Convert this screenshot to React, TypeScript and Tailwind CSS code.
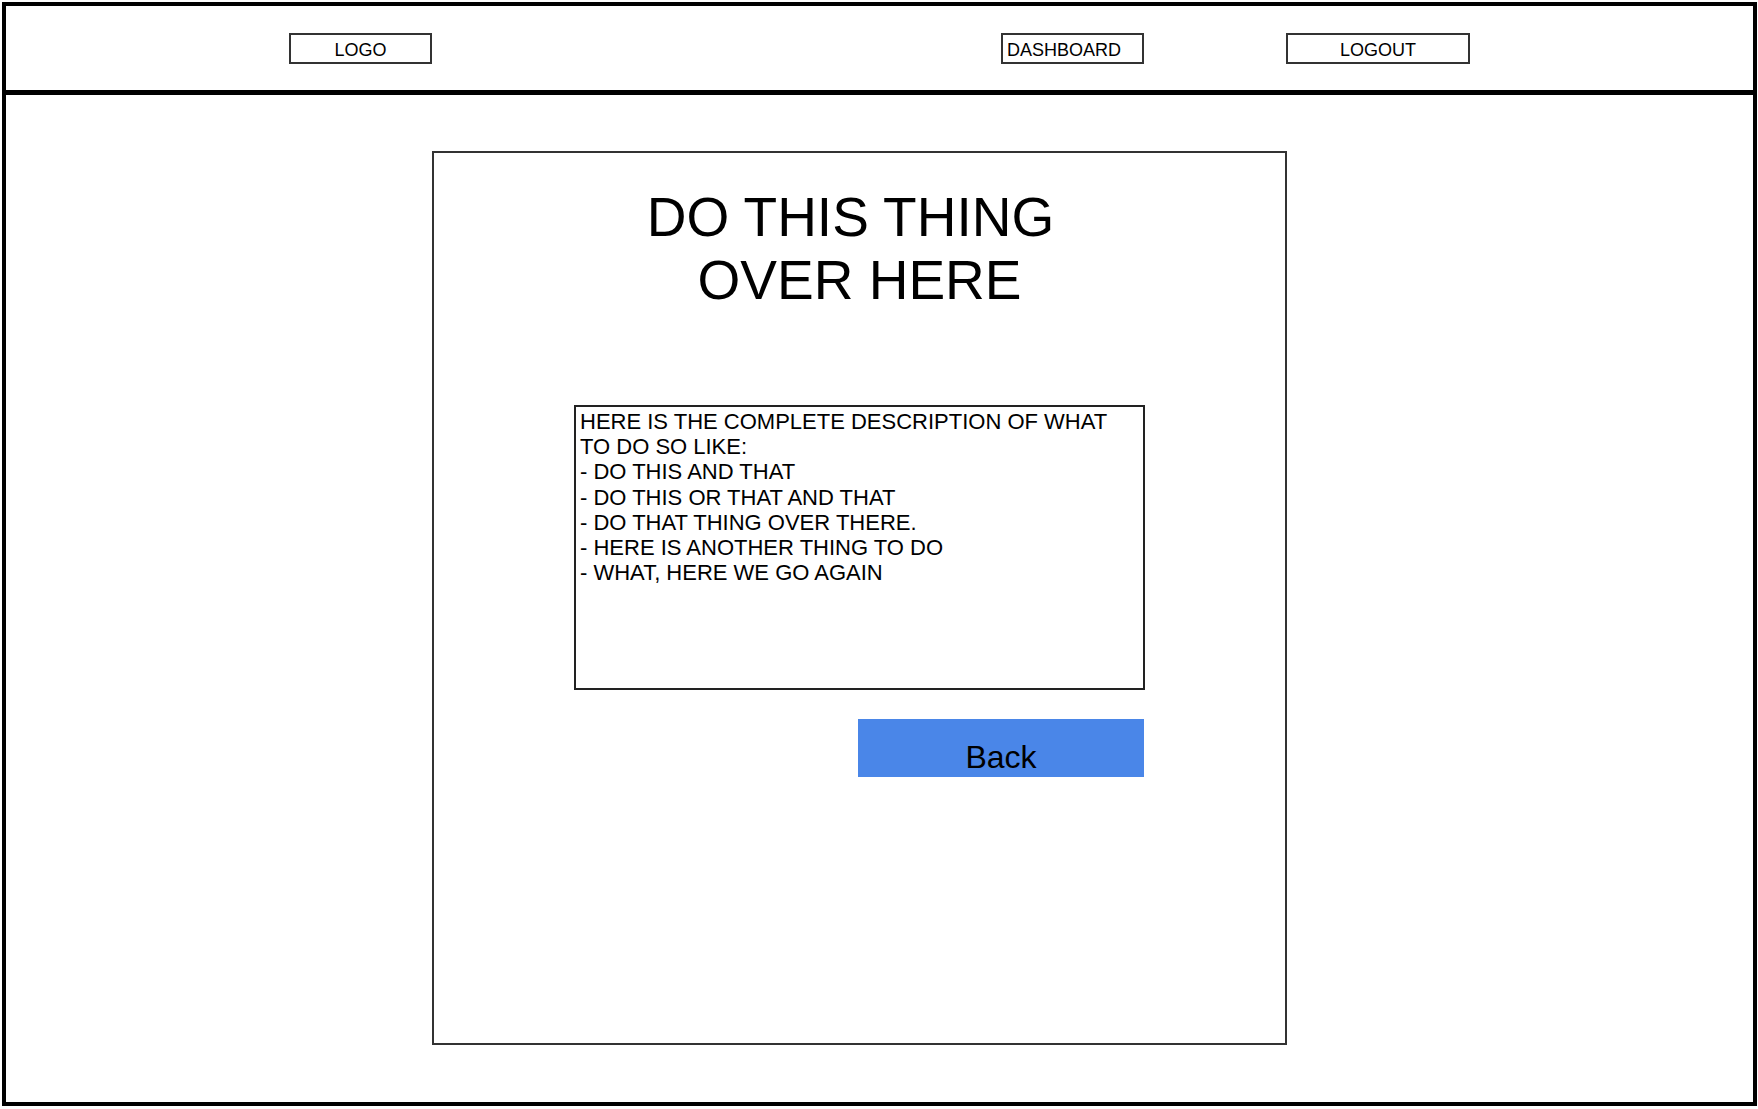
import React from "react";

const font = { fontFamily: '"Liberation Sans", Arial, sans-serif' };

export default function App() {
  return (
    <div className="w-[1758px] h-[1109px] bg-white pl-[2px] pt-[2px] text-black" style={font}>
      <div className="w-[1755px] h-[1104px] border-4 border-black flex flex-col">
        <header className="h-[89px] shrink-0 border-b-[5px] border-black flex items-start pt-[27px] pl-[283px]">
          <div className="w-[143px] h-[31px] border-2 border-[#333] flex items-center justify-center text-[18px] leading-none pt-[3px]">
            LOGO
          </div>
          <div className="ml-[569px] w-[143px] h-[31px] border-2 border-[#333] flex items-center justify-start pl-[4px] text-[18px] leading-none pt-[3px] whitespace-nowrap overflow-hidden">
            DASHBOARD
          </div>
          <div className="ml-[142px] w-[184px] h-[31px] border-2 border-[#333] flex items-center justify-center text-[18px] leading-none pt-[3px]">
            LOGOUT
          </div>
        </header>
        <main className="pt-[56px] pl-[426px]">
          <div className="w-[855px] h-[894px] border-2 border-[#333] flex flex-col">
            <h1 className="mt-[33px] text-center text-[55px] leading-[63px] font-normal">
              <span className="block pr-[18px]">DO THIS THING</span>
              <span className="block">OVER HERE</span>
            </h1>
            <div className="mt-[93px] ml-[140px] w-[571px] h-[285px] border-2 border-[#222] pl-[4px] pt-[2px] text-[22px] leading-[25.2px]">
              <div>HERE IS THE COMPLETE DESCRIPTION OF WHAT</div>
              <div>TO DO SO LIKE:</div>
              <div>- DO THIS AND THAT</div>
              <div>- DO THIS OR THAT AND THAT</div>
              <div>- DO THAT THING OVER THERE.</div>
              <div>- HERE IS ANOTHER THING TO DO</div>
              <div>- WHAT, HERE WE GO AGAIN</div>
            </div>
            <button className="mt-[29px] ml-[424px] w-[286px] h-[58px] bg-[#4a86e8] flex items-end justify-center pb-[4px] text-[32px] leading-[32px] text-black">
              Back
            </button>
          </div>
        </main>
      </div>
    </div>
  );
}
